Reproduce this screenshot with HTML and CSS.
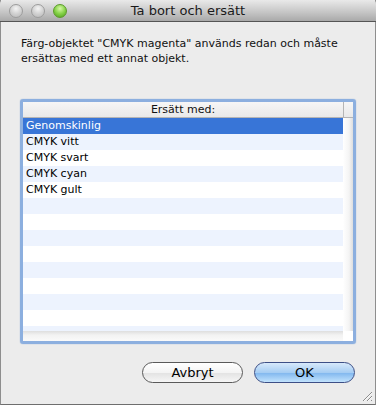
FILE: index.html
```html
<html lang="sv">
<head>
    <meta charset="UTF-8">
    <title>Ta bort och ersätt</title>
    <link rel="stylesheet" href="styles.css">
</head>
<body>
    <div class="window">
        <div class="titlebar">
            <div class="lights">
                <span class="light"></span>
                <span class="light"></span>
                <span class="light green"></span>
            </div>
            <div class="title">Ta bort och ersätt</div>
        </div>

        <p class="message">Färg-objektet "CMYK magenta" används redan och måste ersättas med ett annat objekt.</p>

        <div class="listbox">
            <div class="table">
                <div class="header">
                    <div class="header-cell">Ersätt med:</div>
                    <div class="header-corner"></div>
                </div>
                <div class="body">
                    <div class="rows">
                        <div class="row selected">Genomskinlig</div>
                        <div class="row">CMYK vitt</div>
                        <div class="row">CMYK svart</div>
                        <div class="row">CMYK cyan</div>
                        <div class="row">CMYK gult</div>
                        <div class="row"></div>
                        <div class="row"></div>
                        <div class="row"></div>
                        <div class="row"></div>
                        <div class="row"></div>
                        <div class="row"></div>
                        <div class="row"></div>
                        <div class="row"></div>
                        <div class="row"></div>
                    </div>
                    <div class="vscroll"></div>
                </div>
                <div class="hscroll-row">
                    <div class="hscroll"></div>
                    <div class="corner"></div>
                </div>
            </div>
        </div>

        <div class="buttons">
            <button class="btn">Avbryt</button>
            <button class="btn default">OK</button>
        </div>

        <svg class="grip" width="11" height="11" viewBox="0 0 11 11">
            <path d="M10 1 L1 10 M10 5 L5 10 M10 9 L9 10" stroke="#8c8c8c" stroke-width="1"/>
            <path d="M10 2 L2 10 M10 6 L6 10" stroke="#fafafa" stroke-width="1"/>
        </svg>
    </div>
</body>
</html>
```
FILE: styles.css
```css
body {
    margin: 0;
    font-family: "DejaVu Sans", "Liberation Sans", sans-serif;
}
.window {
    position: relative;
    width: 376px;
    height: 405px;
    box-sizing: border-box;
    background-color: #ececec;
    border-left: 1px solid #8e8e8e;
    border-right: 1px solid #8e8e8e;
    border-bottom: 1px solid #6e6e6e;
}
.titlebar {
    position: relative;
    height: 22px;
    box-sizing: border-box;
    margin: 0 -1px;
    border-bottom: 1px solid #555;
    background: linear-gradient(#e9e9e9, #c4c4c4 60%, #a9a9a9);
    border-radius: 4px 4px 0 0;
}
.lights {
    position: absolute;
    left: 9px;
    top: 4px;
    display: flex;
    gap: 8px;
}
.light {
    width: 12px;
    height: 12px;
    border-radius: 50%;
    border: 1px solid #9d9d9d;
    background: radial-gradient(circle at 50% 30%, #f4f4f4, #cfcfcf 55%, #b9b9b9);
}
.light.green {
    border-color: #5c9a2a;
    background: radial-gradient(circle at 50% 30%, #d8f7a8, #86d348 50%, #4d9c1c);
}
.title {
    text-align: center;
    font-size: 13px;
    line-height: 22px;
    color: #1a1a1a;
}
.message {
    margin: 14px 20px 0 20px;
    font-size: 11px;
    line-height: 15px;
    color: #111;
}
.listbox {
    margin: 33px 0 0 19px;
    width: 336px;
    height: 245px;
    box-sizing: border-box;
    border: 3px solid #8cafdf;
    border-radius: 3px;
    box-shadow: 0 0 1px #6f97d0;
}
.table {
    display: flex;
    flex-direction: column;
    height: 100%;
    background-color: #fff;
}
.header {
    display: flex;
    height: 16px;
    box-sizing: border-box;
    border-bottom: 1px solid #b5b5b5;
    background: linear-gradient(#f6f6f6, #e9e9e9);
}
.header-cell {
    width: 320px;
    text-align: center;
    font-size: 11px;
    line-height: 15px;
    color: #111;
}
.header-corner {
    flex: 1;
    border-left: 1px solid #b5b5b5;
}
.body {
    display: flex;
    height: 213px;
    overflow: hidden;
}
.rows {
    width: 320px;
}
.row {
    height: 16px;
    padding-left: 3px;
    font-size: 11px;
    line-height: 16px;
    color: #000;
}
.row:nth-child(even) {
    background-color: #edf3fe;
}
.row.selected {
    background-color: #3875d7;
    color: #fff;
}
.vscroll {
    flex: 1;
    background: linear-gradient(90deg, #fff, #f4f4f4 60%, #dedede);
}
.hscroll-row {
    display: flex;
    height: 10px;
}
.hscroll {
    width: 320px;
    background: linear-gradient(#dedede, #f2f2f2 40%, #fafafa);
}
.corner {
    flex: 1;
    background-color: #fff;
}
.buttons {
    display: flex;
    justify-content: flex-end;
    gap: 11px;
    margin: 18px 20px 0 0;
}
.btn {
    width: 101px;
    height: 21px;
    border: 1px solid #5a5a5a;
    border-radius: 11px;
    font-family: "DejaVu Sans", "Liberation Sans", sans-serif;
    font-size: 13px;
    line-height: 18px;
    color: #000;
    padding: 0;
    background: linear-gradient(#ffffff, #f4f4f4 50%, #e2e2e2 51%, #f6f6f6);
}
.btn.default {
    border-color: #3d4f86;
    background: linear-gradient(#d7e9fb, #a6cdf3 50%, #7fb6ee 51%, #c2e3fd);
}
.grip {
    position: absolute;
    right: 2px;
    bottom: 2px;
}
```
